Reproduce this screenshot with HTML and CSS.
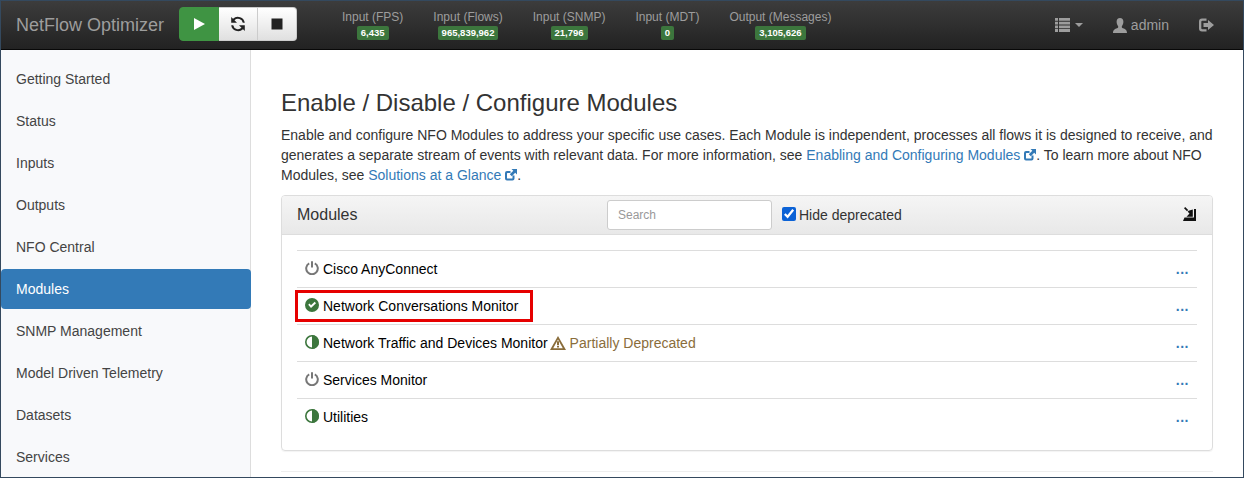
FILE: index.html
```html
<!DOCTYPE html>
<html lang="en">
<head>
<meta charset="utf-8">
<title>NetFlow Optimizer</title>
<link rel="stylesheet" href="styles.css">
</head>
<body>
<div class="frame">
  <header class="navbar">
    <div class="brand">NetFlow Optimizer</div>
    <div class="btn-group">
      <button class="btn btn-play"><svg width="14" height="14" viewBox="0 0 14 14"><path d="M2 1 L13 7 L2 13 Z" fill="#fff"/></svg></button>
      <button class="btn"><svg width="16" height="16" viewBox="0 0 16 16"><path d="M14.800 6.800A7 7 0 0 0 3 2.800L1.200 1V6.800H7L4.500 4.300A4.900 4.900 0 0 1 12.800 6.800ZM1.200 9.200A7 7 0 0 0 13 13.200L14.800 15V9.200H9L11.500 11.700A4.900 4.900 0 0 1 3.200 9.200Z" fill="#222"/></svg></button>
      <button class="btn"><svg width="12" height="12" viewBox="0 0 12 12"><rect x="0.5" y="0.5" width="11" height="11" fill="#222"/></svg></button>
    </div>
    <div class="stats">
      <div class="stat"><span class="stat-label">Input (FPS)</span><span class="badge">6,435</span></div>
      <div class="stat"><span class="stat-label">Input (Flows)</span><span class="badge">965,839,962</span></div>
      <div class="stat"><span class="stat-label">Input (SNMP)</span><span class="badge">21,796</span></div>
      <div class="stat"><span class="stat-label">Input (MDT)</span><span class="badge">0</span></div>
      <div class="stat"><span class="stat-label">Output (Messages)</span><span class="badge">3,105,626</span></div>
    </div>
    <div class="nav-right">
      <span class="nav-menu"><svg width="15" height="14" viewBox="0 0 15 14"><path d="M0 0h3v2.800H0zM4 0h11v2.800H4zM0 3.700h3v2.800H0zM4 3.700h11v2.800H4zM0 7.400h3v2.800H0zM4 7.400h11v2.800H4zM0 11.100h3V14H0zM4 11.100h11V14H4z" fill="#9d9d9d"/></svg><span class="caret"></span></span>
      <span class="nav-user"><svg width="14" height="15" viewBox="0 0 14 15"><path d="M7 0C9.200 0 10.400 1.600 10.400 3.800 10.400 6 9.400 7.600 8.800 8.400 8.600 9.200 9 9.800 10 10.200 12 11 14 11.600 14 15H0C0 11.600 2 11 4 10.200 5 9.800 5.400 9.200 5.200 8.400 4.600 7.600 3.600 6 3.600 3.800 3.600 1.600 4.800 0 7 0Z" fill="#9d9d9d"/></svg><span>admin</span></span>
      <span class="nav-logout"><svg width="15" height="14" viewBox="0 0 15 14"><path d="M7.500 0.500H3A3 3 0 0 0 0 3.500V10.500A3 3 0 0 0 3 13.500H7.500V11.300H3.400A1.100 1.100 0 0 1 2.300 10.200V3.800A1.100 1.100 0 0 1 3.400 2.700H7.500Z" fill="#9d9d9d"/><path d="M4.500 5H9V2L15 7 9 12V9H4.500Z" fill="#9d9d9d"/></svg></span>
    </div>
  </header>
  <div class="body">
    <nav class="sidebar">
      <a class="side-item">Getting Started</a>
      <a class="side-item">Status</a>
      <a class="side-item">Inputs</a>
      <a class="side-item">Outputs</a>
      <a class="side-item">NFO Central</a>
      <a class="side-item active">Modules</a>
      <a class="side-item">SNMP Management</a>
      <a class="side-item">Model Driven Telemetry</a>
      <a class="side-item">Datasets</a>
      <a class="side-item">Services</a>
    </nav>
    <main class="main">
      <h1 class="title">Enable / Disable / Configure Modules</h1>
      <p class="intro">Enable and configure NFO Modules to address your specific use cases. Each Module is independent, processes all flows it is designed to receive, and generates a separate stream of events with relevant data. For more information, see <a class="link">Enabling and Configuring Modules <svg class="ext" width="12" height="12" viewBox="0 0 12 12"><path d="M9.500 6.500V9.500A2 2 0 0 1 7.500 11.500H2A2 2 0 0 1 0 9.500V4A2 2 0 0 1 2 2H5.500V4H2.500A.5.5 0 0 0 2 4.500V9A.5.5 0 0 0 2.500 9.500H7A.5.5 0 0 0 7.500 9V6.500Z" fill="#337ab7"/><path d="M6.500 0H12V5.500L10.200 3.700 6.800 7.200 4.800 5.200 8.300 1.800Z" fill="#337ab7"/></svg></a>. To learn more about NFO Modules, see <a class="link">Solutions at a Glance <svg class="ext" width="12" height="12" viewBox="0 0 12 12"><path d="M9.500 6.500V9.500A2 2 0 0 1 7.500 11.500H2A2 2 0 0 1 0 9.500V4A2 2 0 0 1 2 2H5.500V4H2.500A.5.5 0 0 0 2 4.500V9A.5.5 0 0 0 2.500 9.500H7A.5.5 0 0 0 7.500 9V6.500Z" fill="#337ab7"/><path d="M6.500 0H12V5.500L10.200 3.700 6.800 7.200 4.800 5.200 8.300 1.800Z" fill="#337ab7"/></svg></a>.</p>
      <section class="panel">
        <div class="panel-head">
          <span class="panel-title">Modules</span>
          <input class="search" type="text" placeholder="Search">
          <label class="hide-dep"><input class="check" type="checkbox" checked>Hide deprecated</label>
          <svg class="sweep" width="14" height="14" viewBox="0 0 14 14"><path d="M0 14L1.500 10.500H11V2H13V14Z" fill="#111"/><path d="M1 1.200L2.200 0 5.200 3 4 4.200Z" fill="#111"/><path d="M5.500 3.800L9.800 2.500V9.700H3.500L6.500 6.500 4.700 4.800Z" fill="#111"/></svg>
        </div>
        <div class="panel-body">
          <div class="row">
            <svg class="status" width="14" height="14" viewBox="0 0 14 14"><path d="M4.200 2.400A5.800 5.800 0 1 0 9.800 2.400" fill="none" stroke="#777" stroke-width="2"/><path d="M7 .2V6.500" stroke="#777" stroke-width="2" fill="none"/></svg>
            <span class="name">Cisco AnyConnect</span><a class="more">...</a>
          </div>
          <div class="row">
            <svg class="status" width="14" height="14" viewBox="0 0 14 14"><circle cx="7" cy="7" r="7" fill="#3c763d"/><path d="M3.200 6.800L6 10 11 5.200 9.700 3.800 6 7.200 4.600 5.600Z" fill="#fff"/></svg>
            <span class="name highlighted">Network Conversations Monitor</span><a class="more">...</a>
          </div>
          <div class="row">
            <svg class="status" width="14" height="14" viewBox="0 0 14 14"><circle cx="7" cy="7" r="6.200" fill="#fff" stroke="#3c763d" stroke-width="1.600"/><path d="M7 0A7 7 0 0 1 7 14Z" fill="#3c763d"/></svg>
            <span class="name">Network Traffic and Devices Monitor</span>
            <span class="warn"><svg width="16" height="14" viewBox="0 0 16 14"><path d="M8 0L16 14H0ZM8 3.500L3.200 12.200H12.800Z" fill="#8a6d3b" fill-rule="evenodd"/><path d="M7 5.200H9V9H7ZM7 9.800H9V11.400H7Z" fill="#8a6d3b"/></svg>Partially Deprecated</span><a class="more">...</a>
          </div>
          <div class="row">
            <svg class="status" width="14" height="14" viewBox="0 0 14 14"><path d="M4.200 2.400A5.800 5.800 0 1 0 9.800 2.400" fill="none" stroke="#777" stroke-width="2"/><path d="M7 .2V6.500" stroke="#777" stroke-width="2" fill="none"/></svg>
            <span class="name">Services Monitor</span><a class="more">...</a>
          </div>
          <div class="row">
            <svg class="status" width="14" height="14" viewBox="0 0 14 14"><circle cx="7" cy="7" r="6.200" fill="#fff" stroke="#3c763d" stroke-width="1.600"/><path d="M7 0A7 7 0 0 1 7 14Z" fill="#3c763d"/></svg>
            <span class="name">Utilities</span><a class="more">...</a>
          </div>
        </div>
      </section>
      <hr class="rule">
    </main>
  </div>
</div>
</body>
</html>
```
FILE: styles.css
```css
* { box-sizing: border-box; }
html, body { margin: 0; padding: 0; height: 100%; overflow: hidden; background: #fff; }
body { font-family: "Liberation Sans", Arial, sans-serif; font-size: 14px; color: #333; }
.frame { width: 1244px; height: 478px; border: 1px solid #34495e; overflow: hidden; display: flex; flex-direction: column; }
.navbar { height: 49px; flex: none; display: flex; align-items: flex-start; background: linear-gradient(#3c3c3c, #222); border-bottom: 1px solid #080808; }
.brand { width: 178px; padding-left: 15px; font-size: 18px; line-height: 48px; color: #9d9d9d; flex: none; }
.btn-group { display: flex; margin-top: 6px; flex: none; }
.btn { height: 34px; width: 39px; display: flex; align-items: center; justify-content: center; padding: 0; background: linear-gradient(#fff, #e0e0e0); border: 1px solid #ccc; border-left-width: 0; }
.btn:last-child { border-radius: 0 4px 4px 0; }
.btn-play { width: 40px; background: #3f9443; border: 1px solid #3f9443; border-radius: 4px 0 0 4px; }
.stats { display: flex; gap: 30px; margin-left: 45px; margin-top: 9px; flex: none; }
.stat { display: flex; flex-direction: column; align-items: center; }
.stat-label { font-size: 12px; line-height: 15px; color: #9d9d9d; white-space: nowrap; margin-bottom: 1px; }
.badge { height: 14px; padding: 0 4px; background: #3c763d; border-radius: 2px; color: #fff; font-size: 9.5px; font-weight: 700; line-height: 14px; }
.nav-right { margin-left: auto; display: flex; align-items: center; height: 48px; color: #9d9d9d; padding-right: 29px; }
.nav-menu { display: flex; align-items: center; gap: 5px; }
.caret { width: 0; height: 0; border-left: 4px solid transparent; border-right: 4px solid transparent; border-top: 4px solid #9d9d9d; }
.nav-user { display: flex; align-items: center; gap: 4px; margin-left: 30px; }
.nav-logout { display: flex; margin-left: 30px; }
.body { flex: 1; display: flex; min-height: 0; }
.sidebar { width: 250px; flex: none; background: #f8f9fb; border-right: 1px solid #ddd; padding-top: 9px; display: flex; flex-direction: column; gap: 2px; }
.side-item { height: 40px; flex: none; line-height: 40px; padding-left: 15px; color: #444; border-radius: 4px; margin-right: -1px; position: relative; }
.side-item.active { background: #337ab7; color: #fff; }
.main { flex: 1; padding: 39px 30px 0 30px; min-width: 0; }
.title { margin: 0; font-size: 24px; font-weight: 400; line-height: 27px; color: #333; }
.intro { margin: 9px 0 10px; line-height: 20px; color: #333; }
.link { color: #337ab7; }
.ext { vertical-align: -1px; }
.panel { border: 1px solid #ddd; border-radius: 4px; box-shadow: 0 1px 1px rgba(0,0,0,.05); height: 256px; }
.panel-head { height: 39px; display: flex; align-items: center; padding: 0 15px; background: linear-gradient(#f5f5f5, #e8e8e8); border-bottom: 1px solid #ddd; border-radius: 3px 3px 0 0; }
.panel-title { font-size: 16px; color: #333; width: 310px; flex: none; }
.search { width: 165px; height: 30px; flex: none; padding: 5px 10px; font: 12px "Liberation Sans", Arial, sans-serif; border: 1px solid #ccc; border-radius: 3px; background: #fff; }
.search::placeholder { color: #999; }
.hide-dep { display: flex; align-items: center; margin-left: 10px; color: #333; }
.check { width: 14px; height: 14px; margin: 0 3px 2px 0; accent-color: #0b62d6; }
.sweep { margin-left: auto; margin-top: -2px; }
.panel-body { padding: 15px 15px 0; }
.row { height: 37px; display: flex; align-items: center; padding: 0 8px; border-top: 1px solid #ddd; color: #000; position: relative; }
.status { flex: none; margin-right: 4px; margin-top: -3px; }
.name { color: #000; white-space: nowrap; margin-top: -1px; }
.highlighted::before { content: ""; box-sizing: border-box; position: absolute; left: -2px; top: 2px; width: 238px; height: 32px; border: 3px solid #e60000; }
.warn { display: flex; align-items: center; gap: 3px; margin-left: 2px; color: #8a6d3b; margin-top: -1px; }
.warn svg { margin-right: 1px; }
.more { margin-left: auto; color: #337ab7; font-weight: 700; font-size: 14px; line-height: 14px; margin-top: -1px; letter-spacing: .5px; }
.rule { margin: 20px 0 0; border: 0; border-top: 1px solid #eee; }
```
